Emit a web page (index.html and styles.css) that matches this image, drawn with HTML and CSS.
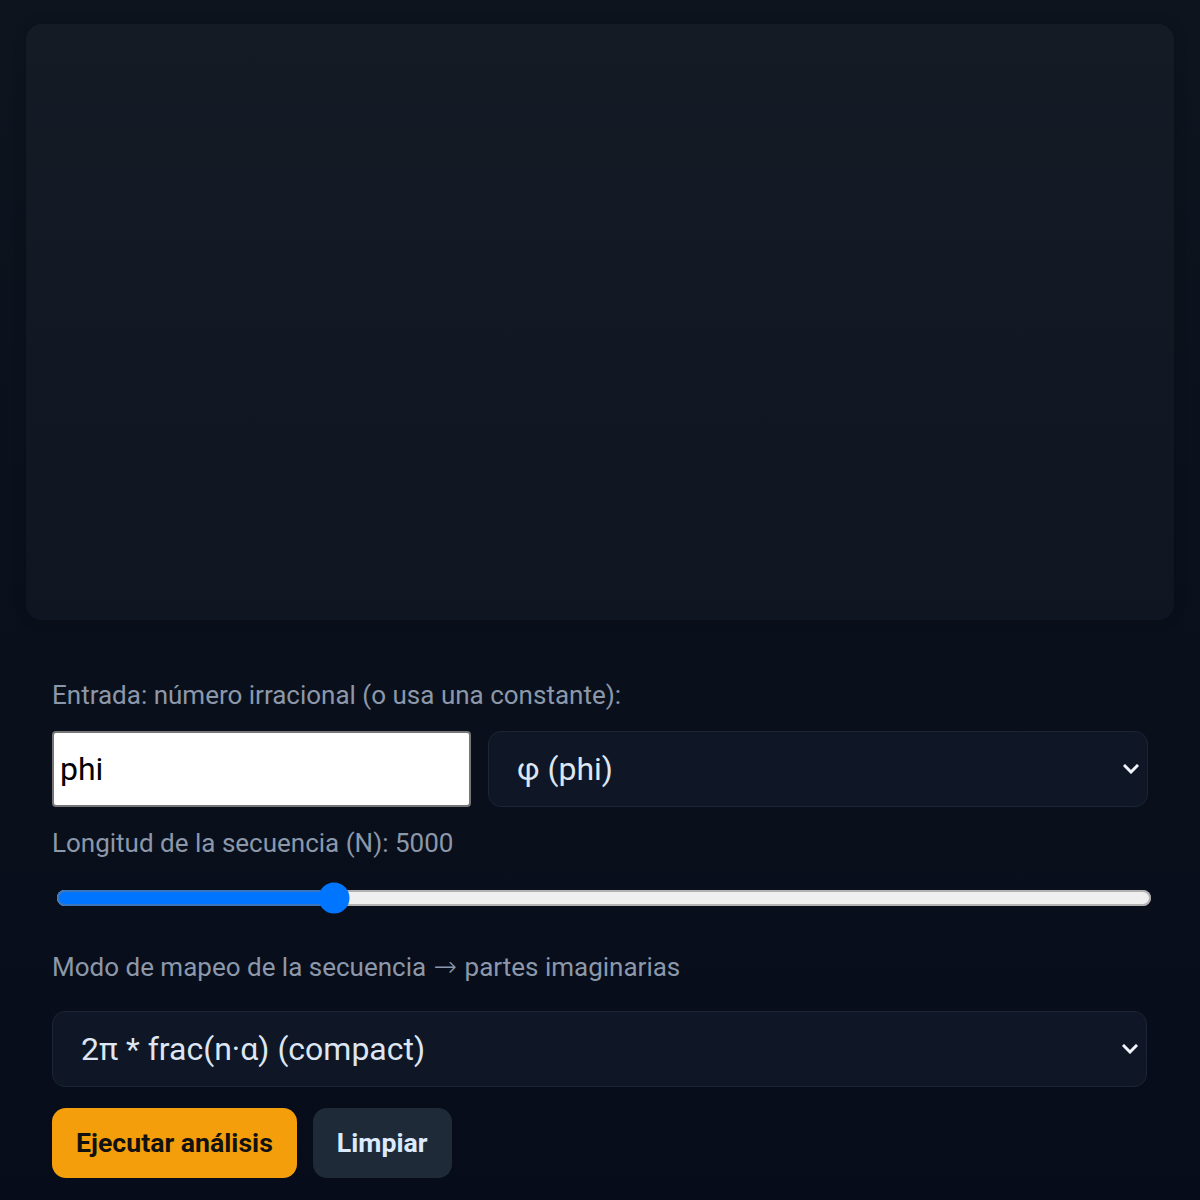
FILE: index.html
```html
<!DOCTYPE html>
<html lang="es">
<head>
<meta charset="utf-8">
<title>Análisis</title>
<link rel="stylesheet" href="styles.css">
</head>
<body>
<div class="page">
  <div class="canvas-card"></div>
  <div class="controls">
    <label class="lbl lbl-first">Entrada: número irracional (o usa una constante):</label>
    <div class="row">
      <input class="txt" type="text" value="phi">
      <div class="sel-wrap">
        <select class="sel"><option>φ (phi)</option></select>
        <svg class="chev" viewBox="0 0 16 10" width="16" height="10"><path d="M2 2 L8 8 L14 2" fill="none" stroke="#f1f5fb" stroke-width="3" stroke-linecap="square"/></svg>
      </div>
    </div>
    <label class="lbl lbl-n">Longitud de la secuencia (N): 5000</label>
    <input class="range" type="range" min="100" max="20000" value="5000">
    <label class="lbl lbl-mode">Modo de mapeo de la secuencia <span class="arr">→</span> partes imaginarias</label>
    <div class="sel-wrap full">
      <select class="sel sel-mode"><option>2π * frac(n·α) (compact)</option></select>
      <svg class="chev" viewBox="0 0 16 10" width="16" height="10"><path d="M2 2 L8 8 L14 2" fill="none" stroke="#f1f5fb" stroke-width="3" stroke-linecap="square"/></svg>
    </div>
    <div class="btns">
      <button class="btn btn-primary">Ejecutar análisis</button>
      <button class="btn btn-secondary">Limpiar</button>
    </div>
  </div>
</div>
</body>
</html>
```

FILE: styles.css
```css
html, body {
  margin: 0;
  padding: 0;
}
body {
  background: linear-gradient(180deg, #0e141e 0%, #0a101b 55%, #060c1a 100%);
  font-family: Roboto, "Noto Sans", sans-serif;
  min-height: 1200px;
  color: #dce5f1;
}
.page {
  padding: 24px 26px 0 26px;
}
.canvas-card {
  height: 596px;
  border-radius: 16px;
  background: linear-gradient(180deg, #151b25 0%, #111823 60%, #0f1622 100%);
  box-shadow: 0 0 12px rgba(0, 0, 0, 0.25);
}
.controls {
  padding: 0 26px;
  display: flex;
  flex-direction: column;
  align-items: flex-start;
}
.lbl {
  display: block;
  font-size: 26px;
  line-height: 30px;
  color: #8c98aa;
}
.arr {
  font-family: "DejaVu Sans", sans-serif;
  font-weight: 300;
  font-size: 28px;
  line-height: 20px;
  margin: 0 1px;
}
.lbl-first { margin-top: 60px; }
.row {
  margin-top: 21px;
  display: flex;
  gap: 17px;
  width: 100%;
}
.txt {
  box-sizing: border-box;
  width: 419px;
  height: 76px;
  margin: 0;
  border: 2px solid #767676;
  border-radius: 4px;
  background: #ffffff;
  color: #000;
  font-family: Roboto, sans-serif;
  font-size: 32px;
  padding: 0 6px;
  outline: none;
}
.sel-wrap {
  position: relative;
  flex: 1;
}
.sel-wrap.full {
  width: 1095px;
  flex: none;
  margin-top: 29px;
}
.sel {
  box-sizing: border-box;
  width: 100%;
  height: 76px;
  margin: 0;
  -webkit-appearance: none;
  appearance: none;
  background: #0f1727;
  border: 1px solid #1c2535;
  border-radius: 13px;
  color: #dde6f2;
  font-family: Roboto, sans-serif;
  font-size: 32px;
  padding: 0 28px;
  outline: none;
}
.chev {
  position: absolute;
  right: 9px;
  top: 33px;
  pointer-events: none;
}
.lbl-n { margin-top: 21px; }
.range {
  zoom: 2;
  width: 548px;
  margin: 12px 0 0 2px;
  accent-color: #0075ff;
}
.lbl-mode { margin-top: 38px; }
.btns {
  margin-top: 21px;
  display: flex;
  gap: 16px;
}
.btn {
  height: 70px;
  border: none;
  border-radius: 14px;
  font-family: Roboto, sans-serif;
  font-weight: 700;
  font-size: 26.67px;
  padding: 0 24px;
}
.btn-primary {
  background: #f59e0b;
  color: #111111;
}
.btn-secondary {
  background: #1f2a38;
  color: #dbeafe;
}
```
